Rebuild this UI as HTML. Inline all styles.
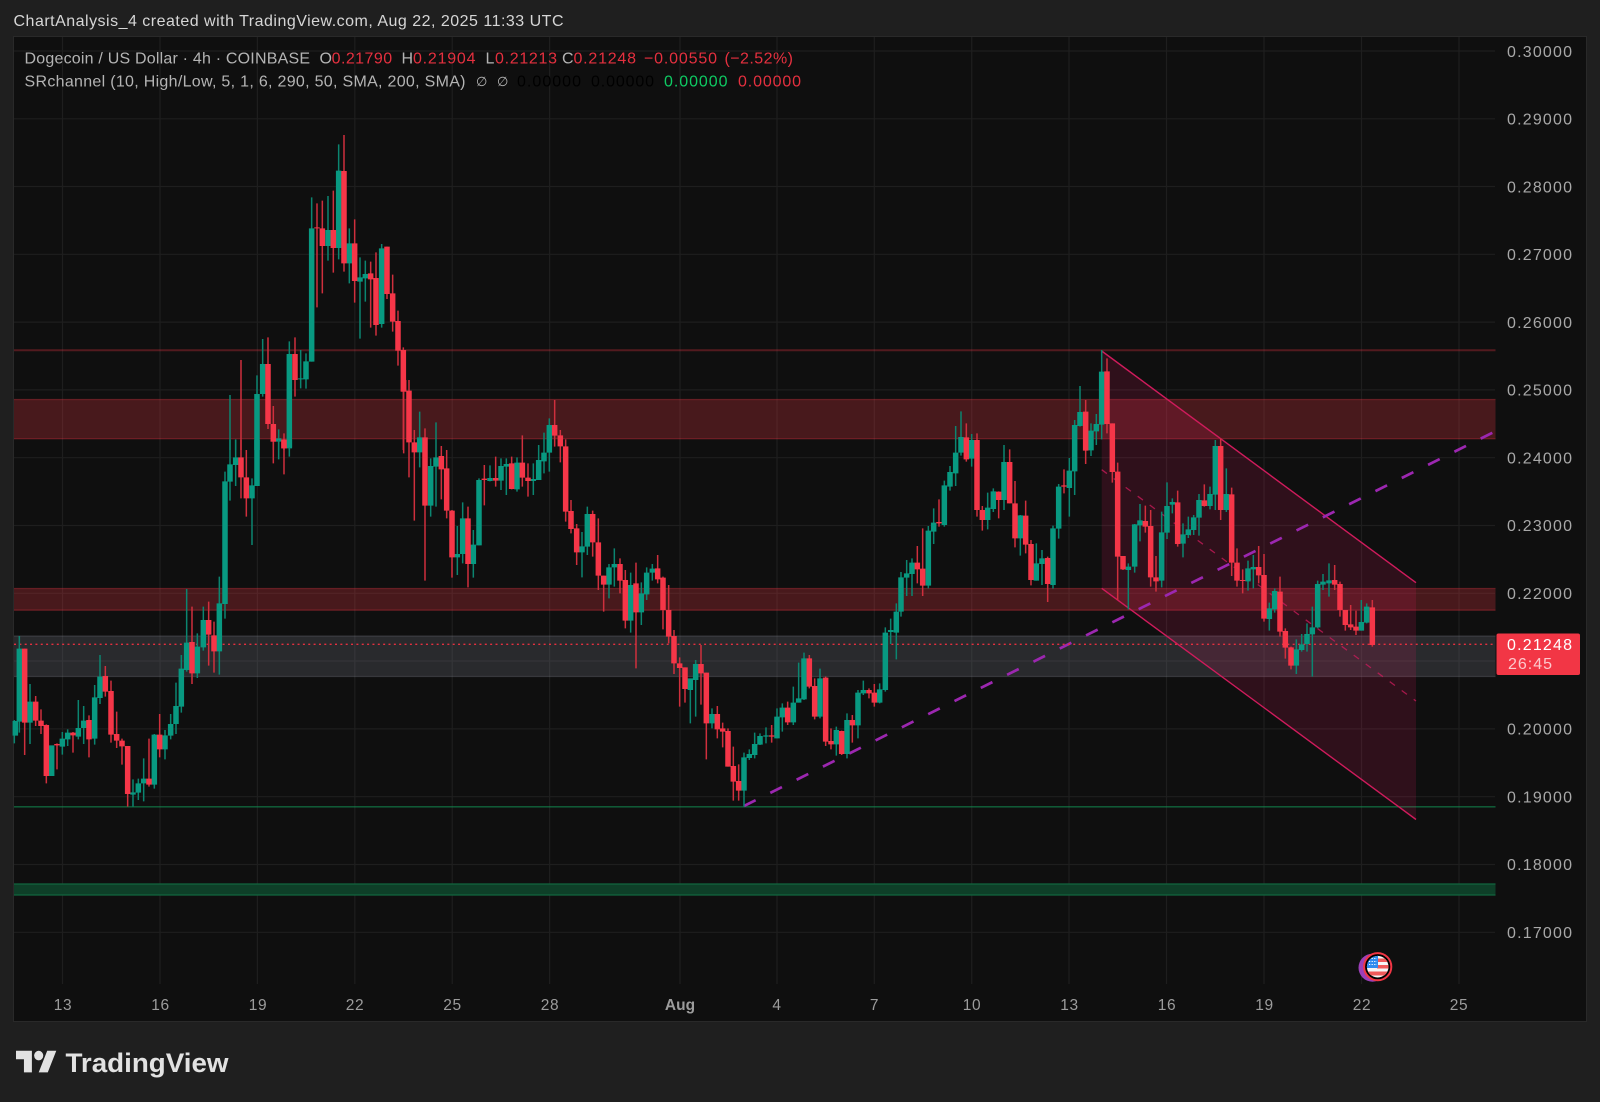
<!DOCTYPE html>
<html><head><meta charset="utf-8"><title>Dogecoin chart</title>
<style>html,body{margin:0;padding:0;background:#1f1f1f}svg{display:block;filter:blur(.35px)}text{font-family:"Liberation Sans",sans-serif}</style></head>
<body>
<svg width="1600" height="1102" viewBox="0 0 1600 1102" xmlns="http://www.w3.org/2000/svg">
<rect width="1600" height="1102" fill="#1f1f1f"/>
<rect x="13.5" y="36.5" width="1573" height="985" fill="#0f0f0f" stroke="#292929" stroke-width="1"/>
<text x="13.5" y="26" font-size="16" fill="#d6d6d6" textLength="550" lengthAdjust="spacing">ChartAnalysis_4 created with TradingView.com, Aug 22, 2025 11:33 UTC</text>
<!-- grid -->
<path stroke="#1e1e1e" stroke-width="1.2" fill="none" d="M62.5 37V984M160 37V984M257.4 37V984M354.8 37V984M452.2 37V984M549.6 37V984M680 37V984M777 37V984M874.3 37V984M971.7 37V984M1069 37V984M1166.5 37V984M1264 37V984M1361.5 37V984M1459 37V984M14 51H1495M14 118.8H1495M14 186.5H1495M14 254.3H1495M14 322.1H1495M14 389.9H1495M14 457.7H1495M14 525.5H1495M14 593.3H1495M14 661H1495M14 728.9H1495M14 796.7H1495M14 864.5H1495M14 932.3H1495"/>
<!-- bands -->
<g>
<rect x="14" y="399.5" width="1481.5" height="39.2" fill="#f23645" fill-opacity=".25"/>
<path d="M14 399.5H1495.5M14 438.7H1495.5" stroke="#f23645" stroke-opacity=".3" stroke-width="1.3"/>
<rect x="14" y="588.5" width="1481.5" height="21.7" fill="#f23645" fill-opacity=".25"/>
<path d="M14 588.5H1495.5M14 610.2H1495.5" stroke="#f23645" stroke-opacity=".3" stroke-width="1.3"/>
<rect x="14" y="636" width="1481.5" height="40.5" fill="#787b86" fill-opacity=".25"/>
<path d="M14 636H1495.5M14 676.5H1495.5" stroke="#787b86" stroke-opacity=".3" stroke-width="1.3"/>
<path d="M14 350.3H1495.5" stroke="#f23645" stroke-opacity=".3" stroke-width="2"/>
<path d="M14 806.8H1495.5" stroke="#128a50" stroke-opacity=".7" stroke-width="1.4"/>
<rect x="14" y="884" width="1481.5" height="11" fill="#0e3f28"/>
<path d="M14 884H1495.5M14 895H1495.5" stroke="#12663e" stroke-width="1.3"/>
</g>
<!-- channel -->
<polygon points="1101.7,351 1416,582.7 1416,819.5 1101.7,588.3" fill="#e91e63" fill-opacity=".15"/>
<path d="M1101.7 351L1416 582.7M1101.7 588.3L1416 819.5" stroke="#cf1b5c" stroke-width="1.4" fill="none"/>
<path d="M1101.7 469.7L1416 701" stroke="#cf1b5c" stroke-opacity=".75" stroke-width="1.3" stroke-dasharray="6.5 8.4" fill="none"/>
<path d="M744 806L1496 431" stroke="#9c27b0" stroke-width="2.7" stroke-dasharray="13 16.4" fill="none"/>
<path d="M14 644.3H1495" stroke="#e5303f" stroke-width="1.4" stroke-dasharray="2 3.35" fill="none"/>
<!-- candles: upper-left -->
<g transform="translate(0,100) scale(.33333)" fill="none">
<path stroke="#0b8570" stroke-width="4.5" d="M690 885V1050M707 1018V1050M771 826V1050M788 717V890M836 988V1050M868 724V1050M902 750V865M918 760V866M935 292V785M984 288V482M1016 133V478M1048 385V550M1080 472V716M1096 482V605M1145 432V683"/>
<path stroke="#cf2f3d" stroke-width="4.5" d="M723 780V1050M804 712V987M820 918V1050M852 1000V1050M885 712V890M951 310V622M967 302V580M1000 272V518M1032 105V515M1064 358V608M1112 485V683M1128 457V707M1161 440V597M1178 524V695M1194 632V797M1210 742V1050"/>
<path stroke="#089981" stroke-width="16.5" d="M771 882V1050M788 792V882M836 1015V1025M868 762V1045M902 835V838M918 784V838M935 385V785M984 390V438M1016 212V444M1048 430V490M1080 532V545M1096 522V535M1145 445V672"/>
<path stroke="#f53648" stroke-width="16.5" d="M804 792V972M820 972V1025M852 1018V1045M885 762V840M951 382V385M967 385V438M1000 390V444M1032 213V490M1064 430V543M1112 520V538M1128 534V675M1161 440V582M1178 580V665M1194 663V752M1210 750V875"/>
</g>
<!-- candles: lower-left -->
<g transform="translate(0,440) scale(.33333)" fill="none">
<path stroke="#0b8570" stroke-width="4.5" d="M43 840V910M58 588V878M90 732V912M187 876V944M203 868V918M235 780V898M251 798V912M284 735V914M300 645V792M399 1018V1100M415 1016V1080M431 955V1084M463 882V1046M495 870V958M512 822V898M528 728V882M544 645V818M560 447V695M592 580V714M610 500V632M658 410V704M675 95V536M690 0V182M707 0V138M756 115V315M771 0V138M836 0V58M868 0V50"/>
<path stroke="#cf2f3d" stroke-width="4.5" d="M74 626V945M107 768V858M123 808V882M139 853V1030M171 910V988M219 876V938M267 826V952M316 678V770M333 722V908M350 815V924M366 896V974M383 918V1100M447 896V1040M479 822V952M576 500V732M626 485V677M642 545V698M723 0V175M739 30V230M820 0V70M852 0V103"/>
<path stroke="#089981" stroke-width="16.5" d="M46 843V887M58 626V845M90 785V848M155 916V1008M187 896V920M203 878V898M235 864V890M251 842V864M284 772V896M300 710V774M399 1057V1064M415 1030V1058M431 1016V1030M463 884V1034M495 886V928M512 852V887M528 798V852M544 686V800M560 608V690M592 620V700M610 540V622M658 490V634M675 124V492M690 73V125M707 52V75M756 136V175M771 0V138M868 0V22"/>
<path stroke="#f53648" stroke-width="16.5" d="M74 626V848M107 785V842M123 842V858M139 855V1008M171 912V916M219 878V886M267 840V898M316 708V755M333 753V884M350 882V902M366 902V919M383 918V1062M447 1016V1034M479 884V928M576 606V700M626 540V584M642 586V634M723 52V112M739 112V175M820 0V5M852 0V25"/>
</g>
<!-- candles: middle -->
<g transform="translate(400,380) scale(.33333)" fill="none">
<path stroke="#0b8570" stroke-width="4.5" d="M59 95V262M92 235V410M108 127V380M172 438V585M188 367V550M220 450V593M237 295V496M270 256V304M303 235V330M319 235V345M351 232V335M400 250V345M416 195V300M432 158V280M448 115V275M546 456V592M562 380V525M627 552V655M643 505V620M692 578V758M724 607V735M740 562V660M757 552V602M871 898V1030M887 840V1010M936 985V1045M1032 1118V1280M1048 1108V1140M1064 1058V1135M1080 1060V1095M1098 1042V1090M1131 985V1075M1147 970V1055M1180 920V1035M1196 848V968M1212 818V960M1260 866V1015M1309 1040V1127M1341 1000V1135M1374 930V1075M1390 902V945M1439 910V970M1456 742V935M1472 716V792M1489 670V838"/>
<path stroke="#cf2f3d" stroke-width="4.5" d="M11 0V220M27 0V292M43 150V422M75 145V602M124 198V358M140 210V415M156 390V593M204 380V622M253 255V376M287 230V320M335 230V328M367 166V320M384 250V350M464 60V200M481 150V247M497 178V425M513 360V460M530 432V555M578 392V530M595 415V630M611 587V695M660 535V640M676 570V745M708 548V865M773 525V610M789 590V748M806 615V790M822 750V882M839 832V980M855 862V968M903 795V974M919 878V1138M952 978V1075M968 1028V1102M984 1045V1160M1000 1100V1262M1016 1153V1262M1115 1035V1088M1163 965V1035M1228 825V925M1244 895V1018M1277 890V1098M1293 1045V1108M1325 1052V1125M1357 1005V1088M1407 925V955M1423 912V980"/>
<path stroke="#089981" stroke-width="16.5" d="M59 172V217M92 258V377M108 232V260M172 522V532M188 415V522M220 494V552M237 300V496M270 294V303M303 258V302M319 252V260M351 248V328M400 297V303M416 240V300M432 218V244M448 135V218M546 499V517M562 402V500M627 562V614M643 552V562M692 615V722M724 640V697M740 578V643M757 566V578M871 895V930M887 852V900M936 1002V1030M1032 1132V1232M1048 1122V1134M1064 1092V1125M1080 1068V1094M1098 1066V1070M1131 1010V1075M1147 983V1012M1180 968V1027M1196 955V968M1212 835V958M1260 895V1010M1309 1050V1093M1341 1020V1122M1374 938V1036M1390 930V940M1439 928V968M1456 758V930M1472 750V756M1489 695V758"/>
<path stroke="#f53648" stroke-width="16.5" d="M11 0V35M27 32V187M43 187V217M75 172V377M124 228V268M140 265V392M156 392V532M204 415V552M253 296V300M287 294V302M335 250V327M367 248V293M384 293V303M464 135V167M481 166V199M497 199V395M513 393V447M530 445V517M578 402V487M595 487V587M611 587V614M660 552V602M676 600V722M708 610V697M773 565V598M789 593V690M806 690V770M822 768V850M839 850V864M855 862V927M903 852V880M919 878V1030M952 1002V1048M968 1045V1055M984 1053V1160M1000 1158V1205M1016 1203V1232M1115 1066V1070M1163 983V1027M1228 835V920M1244 918V1010M1277 893V1085M1293 1083V1093M1325 1053V1122M1357 1020V1036M1407 930V940M1423 938V968"/>
</g>
<!-- candles: right-middle -->
<g transform="translate(880,340) scale(.33333)" fill="none">
<path stroke="#0b8570" stroke-width="4.5" d="M63 696V830M80 660V768M96 655V768M145 558V745M161 505V612M193 422V560M210 378V452M227 258V438M243 214V347M275 282V380M323 458V568M340 445V516M372 315V510M421 525V647M469 610V722M486 630V735M519 557V746M536 432V596M568 354V530M584 240V465M600 138V260M633 250V348M649 222V315M665 30V298M745 670V808M764 552V698M780 492V604M845 515V742M861 427V597M877 475V520M909 550V652M925 530V594M941 525V585M957 462V587M990 440V508M1006 300V510M1039 385V516"/>
<path stroke="#cf2f3d" stroke-width="4.5" d="M112 618V730M128 565V768M177 478V560M259 250V365M291 280V530M307 498V572M356 454V535M389 328V490M405 423V622M437 482V640M453 600V736M503 650V786M552 388V460M617 180V372M681 55V280M697 250V428M713 368V780M729 648V690M796 497V578M812 510V740M828 648V755M893 452V620M973 433V500M1022 296V540M1055 443V708M1071 625V740"/>
<path stroke="#089981" stroke-width="16.5" d="M63 712V815M80 700V713M96 668V702M145 572V737M161 548V575M193 436V555M210 396V440M227 338V400M243 291V338M275 300V356M323 503V540M340 454V507M372 366V480M421 526V595M469 670V722M486 655V672M519 565V735M536 440V566M568 392V444M584 255V394M600 216V258M633 272V331M649 252V274M665 95V254M745 680V690M764 553V680M780 541V556M845 577V722M861 498V578M877 486V494M909 583V611M925 568V585M941 532V570M957 480V533M990 462V498M1006 318V464M1039 462V510"/>
<path stroke="#f53648" stroke-width="16.5" d="M112 668V688M128 686V737M177 546V550M259 292V358M291 300V510M307 510V540M356 455V480M389 366V490M405 490V595M437 527V614M453 612V720M503 654V732M552 436V440M617 215V332M681 94V252M697 250V396M713 395V650M729 648V688M796 543V560M812 558V712M828 712V724M893 487V612M973 481V498M1022 318V510M1055 463V668M1071 668V722"/>
</g>
<!-- candles: right -->
<g transform="translate(1200,420) scale(.33333)" fill="none">
<path stroke="#0b8570" stroke-width="4.5" d="M144 422V512M160 405V505M208 548V632M224 505V578M289 658V762M305 642V695M321 610V695M337 560V770M353 482V625M369 462V510M387 430V530M484 540V632M500 550V610"/>
<path stroke="#cf2f3d" stroke-width="4.5" d="M128 448V520M176 378V490M192 402V605M240 470V650M256 625V716M273 680V748M404 435V510M420 485V590M436 570V632M452 555V630M468 572V645M517 540V680"/>
<path stroke="#089981" stroke-width="16.5" d="M144 445V484M160 441V448M208 565V597M224 513V568M289 688V737M305 673V690M321 642V672M337 622V643M353 492V622M369 485V494M387 481V490M484 606V632M500 560V608"/>
<path stroke="#f53648" stroke-width="16.5" d="M128 480V483M176 441V466M192 465V596M240 515V635M256 633V683M273 682V737M404 480V494M420 492V570M436 570V615M452 613V622M468 620V632M517 562V675"/>
</g>
<!-- legend -->
<g font-size="16">
<text x="24.5" y="63.5" fill="#b4b4b4" textLength="285.5" lengthAdjust="spacing">Dogecoin / US Dollar · 4h · COINBASE</text>
<text x="319.5" y="63.5" fill="#b4b4b4">O</text><text x="331.6" y="63.5" fill="#e5303f" textLength="60.5">0.21790</text>
<text x="401.5" y="63.5" fill="#b4b4b4">H</text><text x="413" y="63.5" fill="#e5303f" textLength="62.5">0.21904</text>
<text x="485.5" y="63.5" fill="#b4b4b4">L</text><text x="495" y="63.5" fill="#e5303f" textLength="62">0.21213</text>
<text x="562" y="63.5" fill="#b4b4b4">C</text><text x="573.5" y="63.5" fill="#e5303f" textLength="62.5">0.21248</text>
<text x="644" y="63.5" fill="#e5303f" textLength="73">−0.00550</text>
<text x="724.5" y="63.5" fill="#e5303f" textLength="68.5">(−2.52%)</text>
<text x="24.5" y="86.5" fill="#b4b4b4" textLength="441" lengthAdjust="spacing">SRchannel (10, High/Low, 5, 1, 6, 290, 50, SMA, 200, SMA)</text>
<text x="476" y="86" fill="#b4b4b4" font-size="13">∅</text><text x="497" y="86" fill="#b4b4b4" font-size="13">∅</text>
<text x="517" y="86.5" fill="#000" textLength="64">0.00000</text>
<text x="591" y="86.5" fill="#000" textLength="63">0.00000</text>
<text x="664" y="86.5" fill="#0ecb63" textLength="63.5">0.00000</text>
<text x="738" y="86.5" fill="#e5303f" textLength="63">0.00000</text>
</g>
<!-- price axis -->
<g font-size="16" fill="#a8a8a8">
<text x="1507" y="57" textLength="65">0.30000</text>
<text x="1507" y="124.5" textLength="65">0.29000</text>
<text x="1507" y="192.5" textLength="65">0.28000</text>
<text x="1507" y="260" textLength="65">0.27000</text>
<text x="1507" y="328" textLength="65">0.26000</text>
<text x="1507" y="395.5" textLength="65">0.25000</text>
<text x="1507" y="463.5" textLength="65">0.24000</text>
<text x="1507" y="531" textLength="65">0.23000</text>
<text x="1507" y="599" textLength="65">0.22000</text>
<text x="1507" y="734.5" textLength="65">0.20000</text>
<text x="1507" y="802.5" textLength="65">0.19000</text>
<text x="1507" y="870" textLength="65">0.18000</text>
<text x="1507" y="938" textLength="65">0.17000</text>
</g>
<rect x="1496.5" y="633.5" width="83.5" height="41.5" rx="2" fill="#f23645"/>
<text x="1507" y="650" font-size="16" fill="#fff" textLength="65">0.21248</text>
<text x="1508" y="669" font-size="16" fill="#fcc8cc" textLength="44">26:45</text>
<!-- time axis -->
<g font-size="15.5" fill="#9c9c9c" text-anchor="middle" letter-spacing=".6">
<text x="63" y="1010">13</text><text x="160.5" y="1010">16</text><text x="258" y="1010">19</text><text x="355" y="1010">22</text><text x="452.5" y="1010">25</text><text x="550" y="1010">28</text>
<text x="680" y="1010" font-weight="700" letter-spacing="0">Aug</text>
<text x="777" y="1010">4</text><text x="874.5" y="1010">7</text><text x="972" y="1010">10</text><text x="1069.5" y="1010">13</text><text x="1167" y="1010">16</text><text x="1264.5" y="1010">19</text><text x="1362" y="1010">22</text><text x="1459" y="1010">25</text>
</g>
<!-- event flag -->
<circle cx="1372.5" cy="967.7" r="14" fill="#9c3fb8"/>
<circle cx="1377.7" cy="966.7" r="13.6" fill="#000" stroke="#f23645" stroke-width="2"/>
<clipPath id="f"><circle cx="1377.7" cy="966.7" r="10.8"/></clipPath>
<g clip-path="url(#f)">
<rect x="1366" y="955" width="24" height="24" fill="#f6f6f6"/>
<path d="M1377 958.5H1390V962H1377zM1377 965H1390V968.5H1377zM1366 971.5H1390V975.5H1366z" fill="#f05a5a"/>
<rect x="1366" y="955" width="12" height="13" fill="#2f8cf0"/>
<path d="M1369 958.5h8M1369 961.5h8M1369 964.5h8" stroke="#fff" stroke-width="1.1" stroke-dasharray="1.2 1.4"/>
</g>
<!-- logo -->
<g transform="translate(16,1046) scale(1.135,1.2)" fill="#e2e2e2">
<path d="M14 22H7V11H0V4h14v18zM28 22h-8l7.5-18h8L28 22z"/><circle cx="20" cy="8" r="4"/>
</g>
<text x="65.5" y="1072" font-size="27" font-weight="700" fill="#e2e2e2" textLength="163" lengthAdjust="spacingAndGlyphs">TradingView</text>
</svg>
</body></html>
